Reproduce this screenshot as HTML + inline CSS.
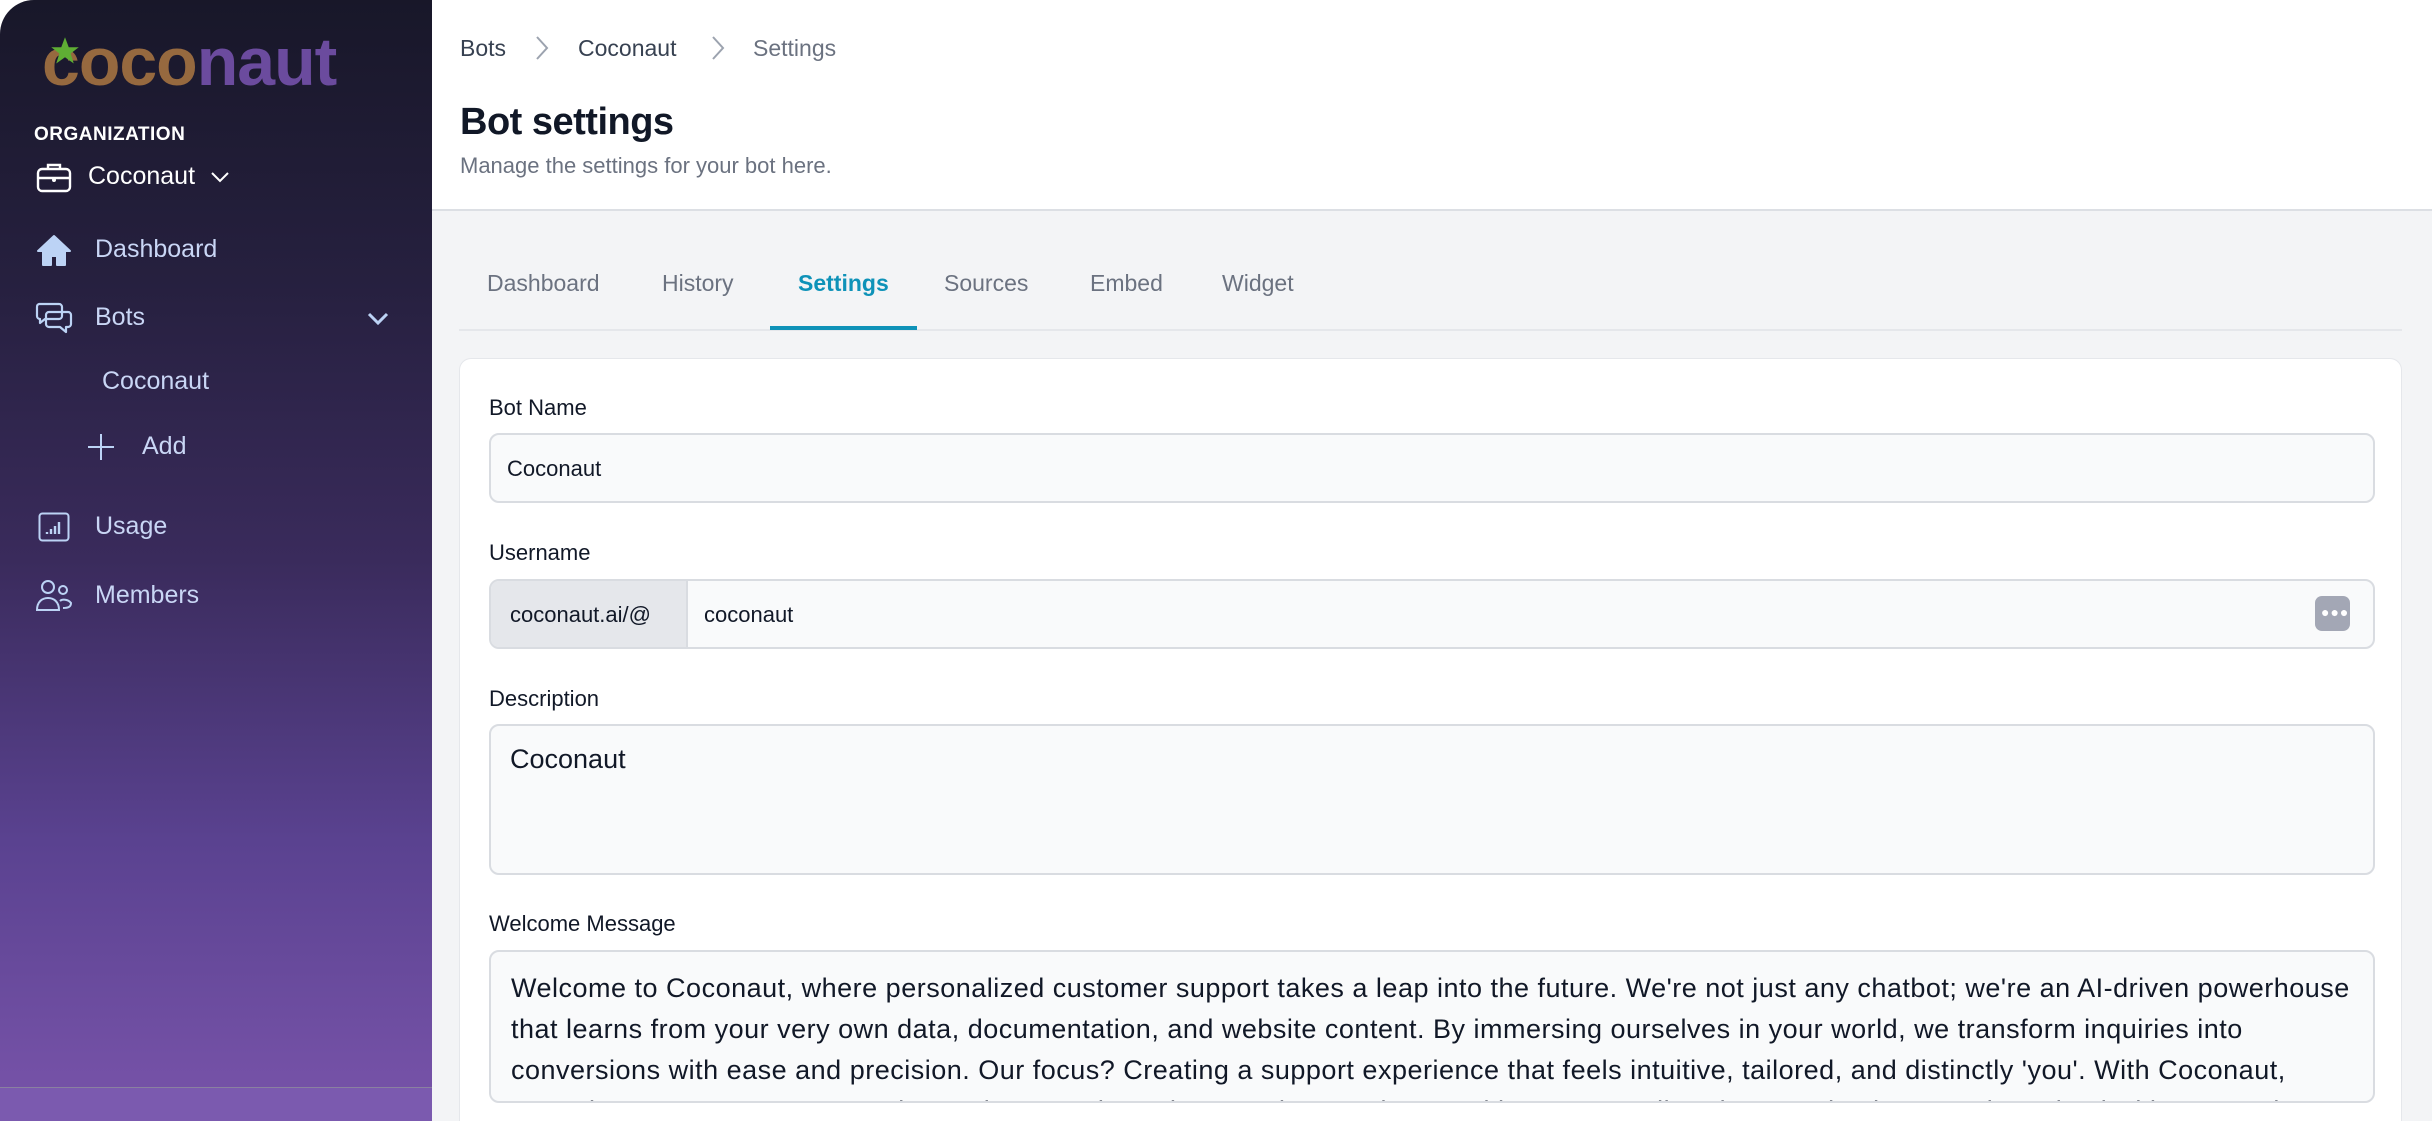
<!DOCTYPE html>
<html style="overflow:hidden;width:2432px;height:1121px"><head><meta charset="utf-8">
<style>
*{margin:0;padding:0;box-sizing:border-box}
body{width:2432px;height:1121px;overflow:hidden;background:#fff;font-family:"Liberation Sans",sans-serif;position:relative}
.sb{position:absolute;left:0;top:0;width:432px;height:1121px;border-top-left-radius:34px;background:linear-gradient(180deg,#181729 0%,#26203f 25%,#3a2b5c 50%,#5a4290 75%,#7451a6 96%);overflow:hidden}
.sb .band{position:absolute;left:0;top:1087px;width:432px;height:34px;background:#7b5aaf;border-top:1px solid #8a80a0}
.abs{position:absolute;white-space:nowrap}
.nav{color:#c9d6f5;font-size:25px}
.main{position:absolute;left:432px;top:0;width:2000px;height:1121px;background:#f3f4f6;overflow:hidden}
.hdr{position:absolute;top:0;width:2000px;height:211px;background:#fff;border-bottom:2px solid #dcdfe4}
.card{position:absolute;left:459px;top:358px;width:1943px;height:763px;background:#fff;border-radius:12px 12px 0 0;border:1px solid #e5e7eb;border-bottom:none}
.lbl{position:absolute;font-size:22px;color:#111827;left:489px}
.inp{position:absolute;left:489px;width:1886px;background:#f9fafb;border:2px solid #d9dce1;border-radius:10px}
</style></head><body>
<div class="sb">
  <div class="abs" style="left:42px;top:24px;font-size:68px;font-weight:bold;letter-spacing:-1px;line-height:76px"><span style="color:#96693f">coco</span><span style="color:#6b4b9e">naut</span></div>
  <svg class="abs" style="left:50px;top:36px" width="30" height="30" viewBox="0 0 24 24"><polygon points="12,1 15,9 23,9 16.5,14 19,22 12,17 5,22 7.5,14 1,9 9,9" fill="#5fae34"/></svg>
  <div class="abs" style="left:34px;top:124px;font-size:19px;font-weight:bold;color:#fff;letter-spacing:0.5px">ORGANIZATION</div>
  <svg class="abs" style="left:36px;top:161px" width="36" height="32" viewBox="0 0 36 32" fill="none" stroke="#fff" stroke-width="2.4"><rect x="2" y="8" width="32" height="22" rx="4"/><path d="M12 8V4h12v4M2 17h32"/><circle cx="18" cy="19" r="0.8" fill="#fff"/></svg>
  <div class="abs" style="left:88px;top:162px;font-size:25px;color:#fff">Coconaut</div>
  <svg class="abs" style="left:210px;top:171px" width="20" height="12" viewBox="0 0 20 12" fill="none" stroke="#fff" stroke-width="2"><path d="M2 2l8 8 8-8"/></svg>
  <svg class="abs" style="left:36px;top:234px" width="36" height="33" viewBox="0 0 36 33"><path d="M18 2L2 17h5v14h8v-9h6v9h8V17h5z" fill="#bcd3f5" stroke="#bcd3f5" stroke-width="2" stroke-linejoin="round"/></svg>
  <div class="abs nav" style="left:95px;top:235px">Dashboard</div>
  <svg class="abs" style="left:35px;top:302px" width="38" height="34" viewBox="0 0 38 34" fill="none" stroke="#bcd3f5" stroke-width="2.2" stroke-linejoin="round"><path d="M4 2h20a3 3 0 0 1 3 3v9a3 3 0 0 1-3 3H10l-5 4v-4a3 3 0 0 1-3-3V5a3 3 0 0 1 2-3z"/><path d="M14 10h19a3 3 0 0 1 3 3v9a3 3 0 0 1-3 3h-2v5l-6-5H14a3 3 0 0 1-3-3v-9a3 3 0 0 1 3-3z"/></svg>
  <div class="abs nav" style="left:95px;top:303px">Bots</div>
  <svg class="abs" style="left:367px;top:312px" width="22" height="14" viewBox="0 0 22 14" fill="none" stroke="#bcd3f5" stroke-width="3"><path d="M2 2l9 9 9-9"/></svg>
  <div class="abs nav" style="left:102px;top:367px">Coconaut</div>
  <svg class="abs" style="left:87px;top:433px" width="28" height="28" viewBox="0 0 28 28" stroke="#bcd3f5" stroke-width="2"><path d="M14 1v26M1 14h26"/></svg>
  <div class="abs nav" style="left:142px;top:432px">Add</div>
  <svg class="abs" style="left:38px;top:512px" width="32" height="30" viewBox="0 0 32 30" fill="none" stroke="#bcd3f5" stroke-width="2"><rect x="1.5" y="1.5" width="29" height="27" rx="3"/><path d="M9 22v-2M13 22v-5M17 22v-8M21 22v-12" stroke-width="2.4"/></svg>
  <div class="abs nav" style="left:95px;top:512px">Usage</div>
  <svg class="abs" style="left:35px;top:579px" width="38" height="33" viewBox="0 0 38 33" fill="none" stroke="#bcd3f5" stroke-width="2"><circle cx="13" cy="8" r="6"/><circle cx="28" cy="11" r="4"/><path d="M2 31c0-8 5-12 11-12s11 4 11 12zM25 22c2-2 8-2 11 2 0 4-3 5-8 5"/></svg>
  <div class="abs nav" style="left:95px;top:581px">Members</div>
  <div class="band"></div>
</div>
<div class="main"><div class="hdr"></div></div>
<div class="abs" style="left:460px;top:35px;font-size:23px;color:#374151">Bots</div>
<svg class="abs" style="left:535px;top:35px" width="14" height="26" viewBox="0 0 14 26" fill="none" stroke="#9ca3af" stroke-width="2"><path d="M2 2l10 11L2 24"/></svg>
<div class="abs" style="left:578px;top:35px;font-size:23px;color:#374151">Coconaut</div>
<svg class="abs" style="left:711px;top:35px" width="14" height="26" viewBox="0 0 14 26" fill="none" stroke="#9ca3af" stroke-width="2"><path d="M2 2l10 11L2 24"/></svg>
<div class="abs" style="left:753px;top:35px;font-size:23px;color:#6b7280">Settings</div>
<div class="abs" style="left:460px;top:101px;font-size:38px;font-weight:bold;color:#111827;letter-spacing:-0.5px">Bot settings</div>
<div class="abs" style="left:460px;top:153px;font-size:22px;color:#6b7280">Manage the settings for your bot here.</div>
<div class="abs" style="left:459px;top:329px;width:1943px;height:2px;background:#e5e7eb"></div>
<div class="abs" style="left:487px;top:270px;font-size:23px;color:#6b7280">Dashboard</div>
<div class="abs" style="left:662px;top:270px;font-size:23px;color:#6b7280">History</div>
<div class="abs" style="left:798px;top:270px;font-size:23px;color:#0e92b8;font-weight:bold">Settings</div>
<div class="abs" style="left:770px;top:326px;width:147px;height:4px;background:#0e92b8"></div>
<div class="abs" style="left:944px;top:270px;font-size:23px;color:#6b7280">Sources</div>
<div class="abs" style="left:1090px;top:270px;font-size:23px;color:#6b7280">Embed</div>
<div class="abs" style="left:1222px;top:270px;font-size:23px;color:#6b7280">Widget</div>
<div class="card"></div>
<div class="lbl" style="top:395px">Bot Name</div>
<div class="inp" style="top:433px;height:70px"></div>
<div class="abs" style="left:507px;top:456px;font-size:22px;color:#111827">Coconaut</div>
<div class="lbl" style="top:540px">Username</div>
<div class="inp" style="top:579px;height:70px;overflow:hidden"><div style="position:absolute;left:0;top:0;width:197px;height:70px;background:#e5e7eb;border-right:2px solid #d9dce1"></div></div>
<div class="abs" style="left:510px;top:602px;font-size:22px;color:#111827">coconaut.ai/@</div>
<div class="abs" style="left:704px;top:602px;font-size:22px;color:#111827">coconaut</div>
<div class="abs" style="left:2315px;top:596px;width:35px;height:35px;background:#a3a7b5;border-radius:7px"></div>
<div class="abs" style="left:2321px;top:604px;font-size:14px;color:#fff;font-weight:bold;letter-spacing:1px">●●●</div>
<div class="lbl" style="top:686px">Description</div>
<div class="inp" style="top:724px;height:151px"></div>
<div class="abs" style="left:510px;top:744px;font-size:27px;color:#111827">Coconaut</div>
<div class="lbl" style="top:911px">Welcome Message</div>
<div class="inp" style="top:950px;height:153px;overflow:hidden;padding:16px 0 0 20px;font-size:27px;line-height:41px;color:#111827;white-space:nowrap;letter-spacing:0.5px">
Welcome to Coconaut, where personalized customer support takes a leap into the future. We're not just any chatbot; we're an AI-driven powerhouse<br>
that learns from your very own data, documentation, and website content. By immersing ourselves in your world, we transform inquiries into<br>
conversions with ease and precision. Our focus? Creating a support experience that feels intuitive, tailored, and distinctly 'you'. With Coconaut,<br>
your also on your terms, engaging and responsive, where each query is met with answers tailored to your business and resolved with care. Join us.
</div>
</body></html>
